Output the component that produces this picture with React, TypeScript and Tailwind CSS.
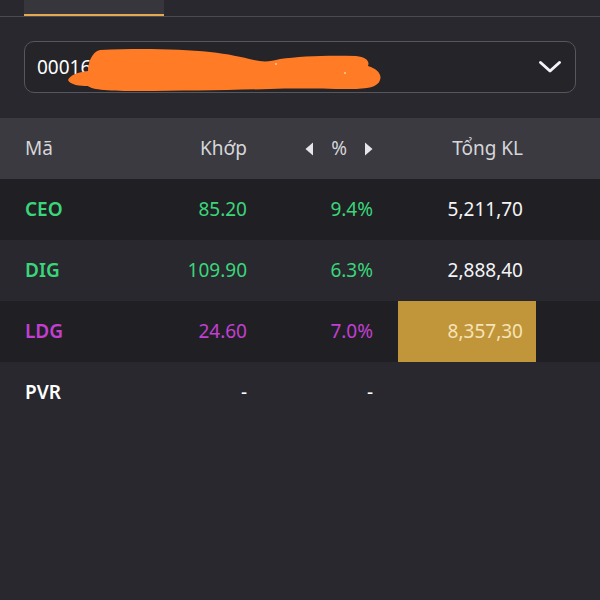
import { useState } from "react";

type Row = {
  code: string;
  price: string;
  pct: string;
  vol: string;
  color: string;
  dark: boolean;
  flash?: boolean;
};

const rows: Row[] = [
  { code: "CEO", price: "85.20", pct: "9.4%", vol: "5,211,70", color: "text-[#3ad67a]", dark: true },
  { code: "DIG", price: "109.90", pct: "6.3%", vol: "2,888,40", color: "text-[#3ad67a]", dark: false },
  { code: "LDG", price: "24.60", pct: "7.0%", vol: "8,357,30", color: "text-[#c23fd2]", dark: true, flash: true },
  { code: "PVR", price: "-", pct: "-", vol: "", color: "text-white", dark: false },
];

// redaction scribble over the account number
const Scribble = () => (
  <svg
    className="absolute left-0 top-[-17px] pointer-events-none"
    width="600"
    height="110"
    viewBox="0 0 600 110"
  >
    <path
      d="M68 80 C70 75 78 72 88 71 C88 62 92 52 100 50 C140 48 180 49 210 52 C228 54 242 57 254 60 C262 62 270 62 280 59 C300 56 330 55 356 56 C366 57 370 61 368 66 C378 69 382 75 380 80 C378 87 368 89 350 89 C320 89 300 88 270 89 C230 90 180 91 140 91 C110 91 92 90 88 86 C80 86 70 85 68 80 Z"
      fill="#ff7b25"
    />
    <circle cx="276" cy="64" r="1" fill="#e8d0b0" />
    <circle cx="345" cy="73" r="1" fill="#e8d0b0" />
  </svg>
);

const Caret = ({ dir }: { dir: "left" | "right" }) => (
  <svg width="9" height="14" viewBox="0 0 9 14">
    {dir === "left" ? (
      <path d="M8 0.5 L8 13.5 L0.5 7 Z" fill="#e6e6ea" />
    ) : (
      <path d="M1 0.5 L1 13.5 L8.5 7 Z" fill="#e6e6ea" />
    )}
  </svg>
);

export default function App() {
  const [tab] = useState(0);

  return (
    <div
      className="w-[600px] h-[600px] bg-[#28282e] overflow-hidden relative"
      style={{ fontFamily: '"Noto Sans", "Open Sans", sans-serif' }}
    >
      {/* top tabs */}
      <div className="h-[17px] flex border-b border-[#4a4a50]">
        <div
          className={`ml-[24px] w-[140px] h-full bg-[#37363d] ${
            tab === 0 ? "border-b-2 border-[#e3aa52]" : ""
          }`}
        />
      </div>

      {/* account select */}
      <div className="px-[24px] pt-[24px] pb-[25px] relative">
        <div className="h-[52px] rounded-[10px] border border-[#56565d] bg-[#242429] flex items-center justify-between pl-[12px] pr-[13px]">
          <span className="text-[19px] text-white">00016</span>
          <svg width="24" height="14" viewBox="0 0 24 14">
            <path
              d="M2.5 2.5 L12 11 L21.5 2.5"
              fill="none"
              stroke="#f4f4f6"
              strokeWidth="3"
              strokeLinecap="round"
              strokeLinejoin="round"
            />
          </svg>
        </div>
        <Scribble />
      </div>

      {/* table header */}
      <div className="h-[61px] bg-[#3a3a40] flex items-center text-[19px] text-[#d6d6da]">
        <div className="w-[140px] pl-[25px]">Mã</div>
        <div className="w-[107px] text-right">Khớp</div>
        <div className="w-[126px] flex items-center justify-end">
          <Caret dir="left" />
          <span className="mx-[17px]">%</span>
          <Caret dir="right" />
        </div>
        <div className="ml-[25px] w-[138px] text-right pr-[13px]">Tổng KL</div>
      </div>

      {/* rows */}
      {rows.map((r) => (
        <div
          key={r.code}
          className={`h-[61px] flex items-center text-[19px] ${
            r.dark ? "bg-[#202024]" : "bg-[#28282e]"
          }`}
        >
          <div className={`w-[140px] pl-[25px] font-semibold ${r.color}`}>{r.code}</div>
          <div className={`w-[107px] text-right ${r.color}`}>{r.price}</div>
          <div className={`w-[126px] text-right ${r.color}`}>{r.pct}</div>
          <div
            className={`ml-[25px] w-[138px] h-full flex items-center justify-end pr-[13px] ${
              r.flash ? "bg-[#c1953a] text-[#f6e3b6]" : "text-[#f4f4f6]"
            }`}
          >
            {r.vol}
          </div>
        </div>
      ))}
    </div>
  );
}
